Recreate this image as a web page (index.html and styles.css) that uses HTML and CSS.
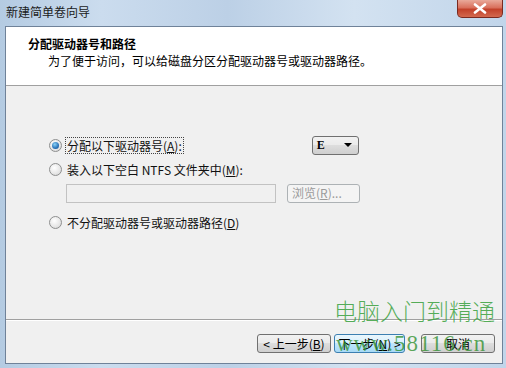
FILE: index.html
```html
<!DOCTYPE html>
<html lang="zh-CN">
<head>
<meta charset="utf-8">
<title>新建简单卷向导</title>
<link rel="stylesheet" href="styles.css">
</head>
<body>
<div class="window">
  <div class="titlebar">
    <span class="title">新建简单卷向导</span>
    <div class="close"><svg width="14" height="11" viewBox="0 0 14 11"><path d="M2 1.5 L12 9.5 M12 1.5 L2 9.5" stroke="#fff" stroke-width="2.6" stroke-linecap="round"/></svg></div>
  </div>
  <div class="client">
    <div class="header">
      <div class="h-title">分配驱动器号和路径</div>
      <div class="h-sub">为了便于访问，可以给磁盘分区分配驱动器号或驱动器路径。</div>
    </div>
    <div class="body">
      <div class="row row1">
        <span class="radio checked"></span>
        <span class="label focus">分配以下驱动器号(<u>A</u>):</span>
        <div class="combo"><span class="cv">E</span><span class="arrow"></span></div>
      </div>
      <div class="row row2">
        <span class="radio"></span>
        <span class="label">装入以下空白 NTFS 文件夹中(<u>M</u>):</span>
      </div>
      <div class="row row3">
        <div class="textbox"></div>
        <div class="btn disabled">浏览(<u>R</u>)...</div>
      </div>
      <div class="row row4">
        <span class="radio"></span>
        <span class="label">不分配驱动器号或驱动器路径(<u>D</u>)</span>
      </div>
    </div>
    <div class="footer">
      <div class="btn wide">&lt; 上一步(<u>B</u>)</div>
      <div class="btn wide default">下一步(<u>N</u>) &gt;</div>
      <div class="btn wide cancel">取消</div>
    </div>
    <div class="watermark">
      <div class="wm1">电脑入门到精通</div>
      <div class="wm2">www.58116.cn</div>
    </div>
  </div>
</div>
</body>
</html>
```
FILE: styles.css
```css
html, body {
  margin: 0;
  padding: 0;
}
body {
  width: 506px;
  height: 368px;
  overflow: hidden;
  font-family: "Noto Sans CJK SC", "DejaVu Sans", sans-serif;
  font-size: 12px;
  color: #000;
}
.window {
  width: 506px;
  height: 368px;
  background: linear-gradient(90deg, #b4cbe2 0%, #cbdcee 20%, #bcd0e6 45%, #d3e2f1 70%, #c1d5ea 100%);
  box-sizing: border-box;
  padding: 0 3px 4px 5px;
  display: flex;
  flex-direction: column;
}
.titlebar {
  height: 26px;
  display: flex;
  align-items: flex-start;
  justify-content: space-between;
}
.title {
  margin-top: 4px;
  margin-left: 1px;
  font-size: 12px;
  line-height: 16px;
  color: #1b1b1b;
}
.close {
  width: 46px;
  height: 18px;
  margin-right: 0;
  border: 1px solid #7a2a20;
  border-top: none;
  border-radius: 0 0 5px 5px;
  box-sizing: border-box;
  background: linear-gradient(180deg, #e9a99a 0%, #d9705c 45%, #c2412a 55%, #d3694f 100%);
  display: flex;
  align-items: center;
  justify-content: center;
}
.client {
  position: relative;
  flex: 1;
  border: 1px solid #6f8299;
  background: #f0f0f0;
  display: flex;
  flex-direction: column;
}
.header {
  height: 59px;
  background: #fff;
  border-bottom: 1px solid #a0a0a0;
  padding: 9px 0 0 22px;
  box-sizing: border-box;
}
.h-title {
  font-weight: bold;
  font-size: 12px;
  line-height: 16px;
}
.h-sub {
  margin-top: 1px;
  padding-left: 20px;
  line-height: 16px;
}
.body {
  height: 234px;
  border-bottom: 1px solid #a0a0a0;
  box-shadow: 0 1px 0 #fff;
  box-sizing: border-box;
  position: relative;
}
.row {
  display: flex;
  align-items: center;
  height: 18px;
}
.row1 { margin-top: 50px; padding-left: 43px; }
.row2 { margin-top: 6px; padding-left: 43px; }
.row3 { margin-top: 6px; padding-left: 60px; }
.row4 { margin-top: 11px; padding-left: 43px; }
.radio {
  width: 11px;
  height: 11px;
  border-radius: 50%;
  border: 1px solid #8e8f8f;
  background: radial-gradient(circle at 40% 35%, #fff 0%, #e6e6e6 60%, #d0d0d0 100%);
  display: inline-block;
  position: relative;
  flex: none;
}
.radio.checked::after {
  content: "";
  position: absolute;
  left: 2px;
  top: 2px;
  width: 7px;
  height: 7px;
  border-radius: 50%;
  background: radial-gradient(circle at 40% 35%, #8ad2f7 0%, #2a73b8 60%, #114b8a 100%);
}
.label {
  margin-left: 3px;
  line-height: 15px;
  padding: 0 1px;
  border: 1px dotted transparent;
  color: #111;
}
.label.focus {
  border-color: #444;
}
.combo {
  margin-left: 128px;
  width: 47px;
  height: 19px;
  box-sizing: border-box;
  border: 1px solid #707070;
  border-radius: 3px;
  background: linear-gradient(180deg, #f2f2f2 0%, #ebebeb 45%, #dddddd 50%, #cfcfcf 100%);
  display: flex;
  align-items: center;
  justify-content: space-between;
  padding: 0 6px 0 4px;
}
.cv {
  font-family: "Liberation Serif", serif;
  font-weight: bold;
  font-size: 12px;
}
.arrow {
  width: 0;
  height: 0;
  border-left: 4px solid transparent;
  border-right: 4px solid transparent;
  border-top: 4px solid #000;
}
.textbox {
  width: 210px;
  height: 19px;
  box-sizing: border-box;
  border: 1px solid #c2c2c2;
  background: #f0f0f0;
}
.btn {
  height: 19px;
  box-sizing: border-box;
  border: 1px solid #707070;
  border-radius: 3px;
  background: linear-gradient(180deg, #f2f2f2 0%, #ebebeb 45%, #dddddd 50%, #cfcfcf 100%);
  display: flex;
  align-items: center;
  justify-content: center;
  font-size: 12px;
  line-height: 14px;
  white-space: nowrap;
}
.btn.disabled {
  margin-left: 11px;
  width: 73px;
  border-color: #adb2b5;
  background: #f4f4f4;
  color: #9a9a9a;
  justify-content: flex-start;
  padding-left: 4px;
}
.footer {
  flex: 1;
  display: flex;
  align-items: flex-start;
  padding: 14px 0 0 251px;
  gap: 3px;
}
.btn.wide {
  width: 74px;
}
.btn.default {
  width: 71px;
  border-color: #3c7fb1;
  background: linear-gradient(180deg, #eaf6fd 0%, #d9f0fc 45%, #bee6fd 50%, #a7d9f5 100%);
}
.btn.cancel {
  margin-left: 13px;
}
.watermark {
  position: absolute;
  left: 328px;
  top: 270px;
  color: rgba(56, 160, 60, 0.85);
  pointer-events: none;
}
.wm1 {
  font-family: "Noto Sans CJK SC", sans-serif;
  font-size: 23px;
  line-height: 26px;
  letter-spacing: 0px;
  font-weight: 300;
}
.wm2 {
  margin-top: 11px;
  margin-left: 2px;
  font-family: "Liberation Serif", serif;
  font-size: 23px;
  line-height: 20px;
  letter-spacing: 1px;
  color: rgba(40, 140, 40, 0.75);
}
```
